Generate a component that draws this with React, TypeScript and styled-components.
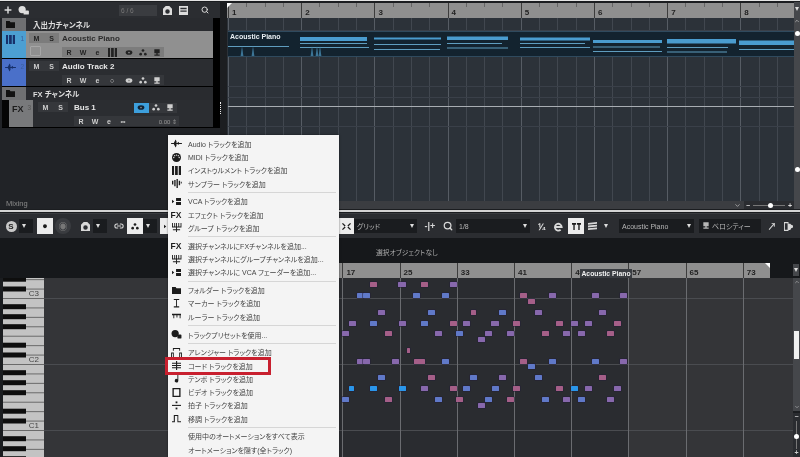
import { ReactNode } from "react";
import styled, { createGlobalStyle } from "styled-components";
import { ChevronDown, ChevronUp, Link2, Plus, Search } from "lucide-react";

const GlobalStyle = createGlobalStyle`
  html, body { margin: 0; padding: 0; background: #1b1d20; }
  body { font-family: "Liberation Sans", "Noto Sans CJK JP", sans-serif; }
`;

const Page = styled.div`
  position: relative;
  display: flex;
  flex-direction: column;
  width: 800px;
  height: 457px;
  overflow: hidden;
  background: #1b1d20;
  filter: blur(0.4px);
`;
const TopEdge = styled.div`
  height: 2px;
  flex: none;
  background: linear-gradient(#e4e4e4 50%, #1b1d20 50%);
`;
const TopZone = styled.div`
  display: flex;
  height: 207px;
  flex: none;
`;
const ZoneDivider = styled.div`
  flex: none;
  height: 5px;
  background: linear-gradient(#1b1d20 0 1px, #d4d4d4 1px 3px, #1b1d20 3px 4px, #3a3c40 4px);
`;

/* track list */
const TrackPane = styled.div`
  display: flex;
  flex-direction: column;
  width: 220px;
  flex: none;
  background: #212327;
`;
const PaneToolbar = styled.div`
  display: flex;
  align-items: center;
  height: 16px;
  flex: none;
  padding: 0 7px 0 3px;
  gap: 5px;
  color: #ddd;
  background: #2b2d31;
`;
const CountBox = styled.div`
  margin-left: auto;
  display: flex;
  align-items: center;
  width: 38px;
  height: 11px;
  padding-left: 2px;
  box-sizing: border-box;
  font-size: 6.5px;
  color: #777;
  background: #3a3c40;
`;
const TrackList = styled.div`
  display: flex;
  flex-direction: column;
  margin-left: 2px;
  background: #000;
  padding-right: 7px;
`;
const FolderRow = styled.div`
  display: flex;
  align-items: center;
  height: 13px;
  background: #292b2f;
  color: #ddd;
  font-size: 7.5px;
  font-weight: 700;
  font-feature-settings: "palt";
`;
const FolderCell = styled.div`
  display: flex;
  align-items: center;
  height: 100%;
  width: 24px;
  padding-left: 3px;
  box-sizing: border-box;
  margin-right: 7px;
  background: #6f7072;
  color: #111;
`;
const TrackRow = styled.div<{ $selected?: boolean }>`
  display: flex;
  height: 27px;
  margin-bottom: 1px;
  background: ${(p) => (p.$selected ? "#909090" : "#2b2d31")};
  color: ${(p) => (p.$selected ? "#2b2b2b" : "#e6e6e6")};
`;
const Gutter = styled.div`
  width: 7px;
  flex: none;
  background: #050505;
`;
const ColorCell = styled.div<{ $color: string }>`
  display: flex;
  align-items: flex-start;
  justify-content: space-between;
  width: 24px;
  flex: none;
  padding: 4px 2px 0 3px;
  box-sizing: border-box;
  background: ${(p) => p.$color};
  color: #17306a;
`;
const TrackNo = styled.span<{ $light?: boolean }>`
  font-size: 6.5px;
  color: ${(p) => (p.$light ? "#555" : "#3a5f9c")};
`;
const FxName = styled.span`
  font-size: 9px;
  font-weight: 700;
  color: #1d1d1d;
`;
const MuteColumn = styled.div<{ $bus?: boolean }>`
  display: flex;
  flex-direction: column;
  gap: 3px;
  width: ${(p) => (p.$bus ? 41 : 36)}px;
  flex: none;
  padding: 2px 0 0 ${(p) => (p.$bus ? 5 : 3)}px;
  box-sizing: border-box;
`;
const BtnRow = styled.div<{ $indent?: number }>`
  display: flex;
  margin-left: ${(p) => p.$indent || 0}px;
`;
const TBtn = styled.span<{ $light?: boolean; $on?: boolean; $w?: number }>`
  display: flex;
  align-items: center;
  justify-content: center;
  width: ${(p) => p.$w || 14}px;
  height: 10px;
  font-size: 7px;
  font-weight: 700;
  background: ${(p) => (p.$on ? "#3d9fdc" : p.$light ? "#7c7c7c" : "#35373b")};
  color: ${(p) => (p.$on ? "#123" : p.$light ? "#222" : "#cfcfcf")};
`;
const CheckBox = styled.div`
  width: 11px;
  height: 10px;
  margin-left: 1px;
  border: 1px solid #a6a6a6;
  box-sizing: border-box;
  border-radius: 1px;
`;
const TrackBody = styled.div`
  display: flex;
  flex-direction: column;
  flex: 1;
  gap: 3px;
  padding-top: 2px;
`;
const HeadRow = styled.div`
  display: flex;
  align-items: center;
  height: 11px;
`;
const TrackName = styled.span`
  font-size: 8px;
  font-weight: 700;
`;
const VolumeBox = styled.span`
  display: flex;
  align-items: center;
  justify-content: flex-end;
  width: 49px;
  height: 10px;
  padding-right: 2px;
  box-sizing: border-box;
  background: #35373b;
  color: #999;
  font-size: 6px;
`;
const MixFooter = styled.div`
  margin-top: auto;
  padding: 0 0 1px 6px;
  font-size: 7.5px;
  color: #8a8a8a;
`;

/* splitter between list and arranger */
const Splitter = styled.div`
  position: relative;
  width: 7px;
  flex: none;
  background: #1c1e21;
  &::after {
    content: "";
    position: absolute;
    left: 0;
    top: 100px;
    height: 12px;
    border-left: 1px dotted #eee;
  }
`;

/* arranger */
const Arranger = styled.div`
  display: flex;
  flex: 1;
  min-width: 0;
`;
const ArrMain = styled.div`
  display: flex;
  flex-direction: column;
  flex: 1;
  min-width: 0;
`;
const Ruler = styled.div`
  position: relative;
  display: flex;
  overflow: hidden;
  flex: none;
  height: 15px;
  margin-top: 1px;
  padding-left: 1px;
  background: repeating-linear-gradient(90deg, #666 0 1px, transparent 1px 18.3px) 1px 0 / 100% 4px no-repeat, #8f8f8f;
`;
const Corner = styled.i<{ $side: "left" | "right" }>`
  position: absolute;
  top: 0;
  ${(p) => p.$side}: 0;
  width: 5px;
  height: 5px;
  background: #fff;
  clip-path: ${(p) => (p.$side === "left" ? "polygon(0 0,100% 0,0 100%)" : "polygon(0 0,100% 0,100% 100%)")};
`;
const RulerBar = styled.div<{ $w: number }>`
  flex: none;
  width: ${(p) => p.$w}px;
  box-sizing: border-box;
  border-left: 1px solid #3c3c3c;
  padding: 5px 0 0 3px;
  font-size: 8px;
  font-weight: 700;
  color: #222;
`;
const Lanes = styled.div`
  display: flex;
  flex-direction: column;
  flex: 1;
  padding-top: 1px;
  padding-left: 1px;
  background:
    repeating-linear-gradient(90deg, #565c64 0 1px, transparent 1px 73.2px) 1px 0,
    repeating-linear-gradient(90deg, #41474f 0 1px, transparent 1px 18.3px) 1px 0,
    #2c3239;
`;
const Lane = styled.div<{ $h: number; $bright?: boolean }>`
  flex: none;
  height: ${(p) => p.$h}px;
  box-sizing: border-box;
  border-bottom: 1px solid ${(p) => (p.$bright ? "#a8adb2" : "#3a4049")};
`;
const Part = styled.div`
  position: relative;
  flex: none;
  height: 26px;
  background: #13232f;
  border-top: 1px solid #2f4a5e;
  border-bottom: 1px solid #2f4a5e;
  box-sizing: border-box;
  overflow: hidden;
`;
const PartLabel = styled.span`
  position: absolute;
  left: 2px;
  top: 1px;
  font-size: 7px;
  font-weight: 700;
  color: #e8eef2;
`;
const PartDrawing = styled.svg`
  position: absolute;
  left: 0;
  top: 0;
`;
const ArrBottom = styled.div`
  display: flex;
  align-items: center;
  justify-content: flex-end;
  flex: none;
  height: 8px;
  background: #3b3d41;
  color: #ddd;
`;
const ZoomBox = styled.div`
  display: flex;
  align-items: center;
  width: 50px;
  height: 100%;
  gap: 3px;
  padding: 0 2px;
  box-sizing: border-box;
  background: #2a2c30;
  margin-left: 3px;
  font-size: 7px;
  font-weight: 700;
`;
const SliderLine = styled.div`
  position: relative;
  flex: 1;
  height: 1px;
  background: #777;
  &::after {
    content: "";
    position: absolute;
    left: 48%;
    top: -2px;
    width: 5px;
    height: 5px;
    border-radius: 50%;
    background: #fff;
  }
`;
const ArrRail = styled.div`
  display: flex;
  flex-direction: column;
  align-items: center;
  width: 6px;
  flex: none;
  background: #45474b;
  color: #eee;
  padding-top: 5px;
  gap: 7px;
`;
const RailKnob = styled.i<{ $top?: number }>`
  display: block;
  width: 5px;
  height: 5px;
  border-radius: 50%;
  background: #fff;
  margin-top: ${(p) => p.$top || 0}px;
`;

/* lower zone */
const Toolbar = styled.div`
  display: flex;
  align-items: center;
  flex: none;
  height: 24px;
  padding: 0 4px 0 3px;
  box-sizing: border-box;
  background: #2b2d31;
  color: #d8d8d8;
`;
const ToolGroup = styled.div<{ $right?: boolean }>`
  display: flex;
  align-items: center;
  margin-left: ${(p) => (p.$right ? "auto" : 0)};
`;
const ToolBtn = styled.span<{ $on?: boolean; $dim?: boolean; $gap?: number }>`
  display: flex;
  align-items: center;
  justify-content: center;
  flex: none;
  width: 16px;
  height: 16px;
  margin-left: ${(p) => p.$gap || 0}px;
  font-size: 9px;
  font-weight: 700;
  border-radius: ${(p) => (p.$dim ? "50%" : 0)};
  background: ${(p) => (p.$on ? "#ececec" : p.$dim ? "#3a3c40" : "transparent")};
  color: ${(p) => (p.$on ? "#1b1b1b" : p.$dim ? "#777" : "#d8d8d8")};
`;
const RoundBadge = styled.span`
  display: flex;
  align-items: center;
  justify-content: center;
  width: 11px;
  height: 11px;
  border-radius: 50%;
  background: #c8c8c8;
  color: #222;
  font-size: 8px;
  font-weight: 700;
`;
const DropBox = styled.span<{ $w: number; $gap?: number }>`
  display: flex;
  align-items: center;
  justify-content: space-between;
  flex: none;
  width: ${(p) => p.$w}px;
  height: 14px;
  margin-left: ${(p) => p.$gap || 0}px;
  padding: 0 3px;
  box-sizing: border-box;
  background: #1a1c1f;
  color: #b6b6b6;
  font-size: 7px;
  font-feature-settings: "palt";
`;
const Arrow = styled.i`
  width: 0;
  height: 0;
  flex: none;
  border-left: 2.5px solid transparent;
  border-right: 2.5px solid transparent;
  border-top: 4px solid #ddd;
`;
const InfoBand = styled.div`
  display: flex;
  align-items: center;
  flex: none;
  height: 25px;
  padding: 3px 0 0 376px;
  box-sizing: border-box;
  background: #16181b;
  color: #aaa;
  font-size: 6.8px;
  font-feature-settings: "palt";
`;
const RulerRow = styled.div`
  position: relative;
  display: flex;
  flex: none;
  height: 15px;
  padding-left: 285.2px;
  background: #16181b;
`;
const EditRuler = styled.div`
  position: relative;
  display: flex;
  width: 484.8px;
  overflow: hidden;
  background: #8f8f8f;
`;
const RowArrow = styled.span`
  display: flex;
  align-items: center;
  justify-content: center;
  position: absolute;
  right: 1px;
  top: 1px;
  width: 6px;
  height: 12px;
  background: #45474b;
`;
const PartTip = styled.span`
  position: absolute;
  left: 580px;
  top: 6px;
  display: flex;
  align-items: center;
  justify-content: center;
  width: 52px;
  height: 9px;
  background: #3a3d42;
  color: #f0f0f0;
  font-size: 6.8px;
  font-weight: 700;
`;
const Roll = styled.div`
  display: flex;
  flex: 1;
  min-height: 0;
  padding-left: 3px;
  background: #1b1d20;
`;
const Keyboard = styled.div`
  position: relative;
  width: 41px;
  flex: none;
`;
const KeyDrawing = styled.svg`
  display: block;
`;
const OctaveLabel = styled.span<{ $top: number }>`
  position: absolute;
  right: 5px;
  top: ${(p) => p.$top}px;
  font-size: 8px;
  line-height: 10px;
  color: #444;
`;
const NoteCanvas = styled.div`
  position: relative;
  flex: 1;
  overflow: hidden;
  background:
    repeating-linear-gradient(180deg, #4a4c50 0 1px, transparent 1px 66px) 0 20px,
    #343538;
`;
const PartShade = styled.div`
  position: absolute;
  left: 184px;
  top: 0;
  bottom: 0;
  width: 400px;
  background: repeating-linear-gradient(180deg, #4a4c50 0 1px, transparent 1px 66px) 0 20px, #2a2c30;
`;
const BarLines = styled.div`
  position: absolute;
  left: 184px;
  top: 0;
  bottom: 0;
  right: 0;
  background: repeating-linear-gradient(90deg, #6a6c70 0 1px, transparent 1px 57.2px);
`;
const NOTE_COLORS = {
  p: "#a55f88",
  u: "#8768ac",
  b: "#6079c8",
  c: "#2a96ea",
};
const Note = styled.i<{ $kind: keyof typeof NOTE_COLORS }>`
  position: absolute;
  height: 5px;
  box-sizing: border-box;
  border-radius: 0.5px;
  background: ${(p) => NOTE_COLORS[p.$kind]};
  box-shadow: 0 0 0 0.5px #231e36;
`;
const RollRail = styled.div`
  display: flex;
  flex-direction: column;
  align-items: center;
  flex: none;
  width: 7px;
  background: #1b1d20;
  color: #ccc;
`;
const RailTrack = styled.div`
  display: flex;
  flex-direction: column;
  align-items: center;
  justify-content: space-between;
  width: 100%;
  height: 133px;
  padding: 1px 0;
  box-sizing: border-box;
  background: #45474b;
`;
const RailThumb = styled.i`
  display: block;
  width: 5px;
  height: 28px;
  margin-top: 1px;
  background: #f0f0f0;
`;
const RailZoom = styled.div`
  display: flex;
  flex-direction: column;
  align-items: center;
  flex: 1;
  margin-top: 2px;
  width: 100%;
  background: #2a2c30;
  font-size: 7px;
  font-weight: 700;
  line-height: 8px;
`;
const RailSlide = styled.i`
  position: relative;
  display: block;
  width: 1px;
  height: 28px;
  background: #777;
  &::after {
    content: "";
    position: absolute;
    left: -2px;
    top: 13px;
    width: 5px;
    height: 5px;
    border-radius: 50%;
    background: #fff;
  }
`;

/* add-track context menu */
const Menu = styled.div`
  position: absolute;
  left: 168px;
  top: 135px;
  width: 171px;
  height: 330px;
  padding-top: 2.3px;
  box-sizing: border-box;
  background: #f4f4f4;
  box-shadow: 0 0 2px rgba(0, 0, 0, 0.5);
  color: #444;
`;
const MenuRow = styled.div`
  display: flex;
  align-items: center;
  height: 13.23px;
  font-size: 7px;
  font-feature-settings: "palt";
  white-space: nowrap;
`;
const MenuIcon = styled.span`
  display: flex;
  align-items: center;
  justify-content: center;
  flex: none;
  width: 16px;
  margin-right: 4px;
  color: #1c1c1c;
  font-size: 8.5px;
  font-weight: 700;
`;
const MenuSep = styled.div`
  height: 4.7px;
  display: flex;
  align-items: center;
  padding: 0 3px 0 20px;
  &::after {
    content: "";
    flex: 1;
    height: 1px;
    background: #d6d6d6;
  }
`;
const Highlight = styled.div`
  position: absolute;
  left: 165px;
  top: 357px;
  width: 106px;
  height: 18px;
  box-sizing: border-box;
  border: 3px solid #c8202f;
`;

const Glyph = ({ children, w = 11, h = 9 }: { children: ReactNode; w?: number; h?: number }) => (
  <svg width={w} height={h} viewBox="0 0 12 10" fill="currentColor" stroke="none">
    {children}
  </svg>
);

const WaveIcon = () => (
  <Glyph><path d="M0 4.5h3l1-2 1-2 1 2v2h1l1-1.5 1 1.5h3v1H9l-1 1-1-1H6v2l-1 2-1-2-1-2H0z" /></Glyph>
);
const DinIcon = () => (
  <Glyph>
    <circle cx="6" cy="5" r="5" />
    <g fill="#f4f4f4"><circle cx="3" cy="5" r=".7" /><circle cx="4" cy="3" r=".7" /><circle cx="6" cy="2.3" r=".7" /><circle cx="8" cy="3" r=".7" /><circle cx="9" cy="5" r=".7" /></g>
  </Glyph>
);
const KeysIcon = () => (
  <Glyph><path d="M1 0h2.3v10H1zM4.4 0h3v10h-3zM8.5 0H11v10H8.5z" /></Glyph>
);
const SamplerIcon = () => (
  <Glyph><path d="M1 2h1.5v4H1zM3.5 1H5v7H3.5zM6 0h1.5v10H6zM8.5 2H10v5H8.5zM10.8 3h1v2h-1z" /></Glyph>
);
const VcaIcon = () => (
  <Glyph><path d="M1 3l2.5 2L1 7zM5.5 1H11v3.5H5.5zM5.5 5.500H11V9H5.5z" /></Glyph>
);
const GroupIcon = () => (
  <Glyph><path d="M1 0h1v4h1.5V0h1v4H5.5V0h1v4H8V0h1v4h1.5V0h1v5H6.5v2H10v1H6.5v2h-1V8H2V7h3.5V5H1z" /></Glyph>
);
const FolderIcon = () => (
  <Glyph><path d="M1 1h4l1 1.5h5V9H1z" /></Glyph>
);
const MarkerIcon = () => (
  <Glyph><path d="M3 0h6v1H6.5v7H9v1.5H3V8h2.5V1H3z" /></Glyph>
);
const RulerIcon = () => (
  <Glyph><path d="M1 2h10v1.5H10.5V7h-1V3.5H7V6H6V3.5H3.5V7h-1V3.5H1z" /></Glyph>
);
const PresetIcon = () => (
  <Glyph><circle cx="4.5" cy="4" r="4" /><rect x="7" y="5" width="4.5" height="4.5" rx="1" /></Glyph>
);
const ArrangerIcon = () => (
  <Glyph><path d="M2 0h8v3H9V1H3v2H2zM0 5h3v5H2V6H1v4H0zM9 5h3v5h-1V6h-1v4H9z" /></Glyph>
);
const ChordIcon = () => (
  <Glyph><path d="M1 2h10v1H1zM1 4.5h10v1H1zM1 7h10v1H1zM5.5 0h1.2v10H5.5z" /></Glyph>
);
const TempoIcon = () => (
  <Glyph><path d="M7 0h1v7.5a2 2 0 1 1-1-1.700z" /></Glyph>
);
const VideoIcon = () => (
  <Glyph><path fillRule="evenodd" d="M1.5 0h9v10h-9zM3 1.5v7h6v-7z" /></Glyph>
);
const SignatureIcon = () => (
  <Glyph><path d="M1 4.3h10v1.2H1z" /><rect x="5" y=".5" width="2" height="2" /><rect x="5" y="7.3" width="2" height="2" /></Glyph>
);
const TransposeIcon = () => (
  <Glyph><path d="M1 8h2V1h5v7h3v1.2H7V2.2H4.2v7H1z" /></Glyph>
);
const EyeIcon = () => (
  <Glyph w={8} h={7}><ellipse cx="6" cy="5" rx="5" ry="3.5" /><circle cx="6" cy="5" r="1.3" fill="#8a8a8a" /></Glyph>
);
const NodeIcon = () => (
  <Glyph w={8} h={7}><circle cx="6" cy="2" r="2" /><circle cx="2.5" cy="7.5" r="2" /><circle cx="9.5" cy="7.5" r="2" /></Glyph>
);
const MeterIcon = () => (
  <Glyph w={8} h={7}><path d="M2 0h8v6H2zM5 6h2v2h3v2H2V8h3z" /></Glyph>
);
const CloudIcon = () => (
  <Glyph><circle cx="4.5" cy="4" r="4" /><rect x="6" y="5" width="6" height="4.5" rx="1" /></Glyph>
);
const CameraIcon = () => (
  <Glyph><path fillRule="evenodd" d="M1 3l3-3h4l3 3v7H1zM3.5 6a2.5 2.5 0 1 0 5 0 2.5 2.5 0 1 0-5 0z" /></Glyph>
);
const ListIcon = () => (
  <Glyph><path fillRule="evenodd" d="M1 0h10v10H1zM2.5 2v1.5h7V2zM2.5 5v1.5h7V5z" /></Glyph>
);
const QuantizeCross = () => (
  <Glyph><path d="M2 1l3 3-1 1-3-3zM10 1L7 4l1 1 3-3zM2 9l3-3-1-1-3 3zM10 9L7 6l1-1 3 3z" /></Glyph>
);
const StackIcon = () => (
  <Glyph><path d="M1 1l10-1v2L1 3zM1 4l10-1v2L1 6zM1 7l10-1v2L1 9z" /></Glyph>
);
const PanelIcon = () => (
  <Glyph><path fillRule="evenodd" d="M1 0h5v2h2l1 1 2 1v2l-2 1-1 2H6v1H1zM2 1.5v7h3v-7z" /></Glyph>
);
const EditorIcon = () => (
  <Glyph><path d="M1 1h4.500v2H4v6H2.500V3H1zM6.500 1H11v2H9.500v6H8V3H6.500z" /></Glyph>
);
const RingE = () => (
  <svg width="11" height="11" viewBox="0 0 12 12" fill="none" stroke="currentColor" strokeWidth="2">
    <path d="M2.500 6.500h7a3.700 3.700 0 1 0-1.200 3" />
  </svg>
);

const MENU: (null | { icon?: ReactNode; text: string })[] = [
  { icon: <WaveIcon />, text: "Audio トラックを追加" },
  { icon: <DinIcon />, text: "MIDI トラックを追加" },
  { icon: <KeysIcon />, text: "インストゥルメント トラックを追加" },
  { icon: <SamplerIcon />, text: "サンプラー トラックを追加" },
  null,
  { icon: <VcaIcon />, text: "VCA トラックを追加" },
  { icon: "FX", text: "エフェクト トラックを追加" },
  { icon: <GroupIcon />, text: "グループ トラックを追加" },
  null,
  { icon: "FX", text: "選択チャンネルにFXチャンネルを追加..." },
  { icon: <GroupIcon />, text: "選択チャンネルにグループチャンネルを追加..." },
  { icon: <VcaIcon />, text: "選択チャンネルに VCA フェーダーを追加..." },
  null,
  { icon: <FolderIcon />, text: "フォルダー トラックを追加" },
  { icon: <MarkerIcon />, text: "マーカー トラックを追加" },
  { icon: <RulerIcon />, text: "ルーラー トラックを追加" },
  null,
  { icon: <PresetIcon />, text: "トラックプリセットを使用..." },
  null,
  { icon: <ArrangerIcon />, text: "アレンジャー トラックを追加" },
  { icon: <ChordIcon />, text: "コード トラックを追加" },
  { icon: <TempoIcon />, text: "テンポ トラックを追加" },
  { icon: <VideoIcon />, text: "ビデオ トラックを追加" },
  { icon: <SignatureIcon />, text: "拍子 トラックを追加" },
  { icon: <TransposeIcon />, text: "移調 トラックを追加" },
  null,
  { text: "使用中のオートメーションをすべて表示" },
  { text: "オートメーションを隠す(全トラック)" },
];

// [y, x, kind, width?] measured from the reference, y/x in 1/3 px steps
type NoteDef = [number, number, keyof typeof NOTE_COLORS, number?];
const NOTES: NoteDef[] = [
  [44, 101, "p"], [44, 187, "u", 8], [44, 252, "p"], [44, 339, "u"],
  [77, 60, "b"], [77, 78, "b"], [77, 228, "b"], [77, 316, "b"], [77, 551, "p"], [77, 637, "u"], [77, 767, "u"], [77, 851, "u"],
  [93, 573, "p"],
  [126, 123, "u"], [126, 273, "b"], [126, 400, "p", 5], [126, 487, "b"], [126, 596, "u"], [126, 788, "u"],
  [159, 37, "u"], [159, 101, "b"], [159, 187, "u"], [159, 252, "b"], [159, 339, "p"], [159, 380, "u"], [159, 466, "u", 8], [159, 529, "p"], [159, 659, "p"], [159, 702, "u"], [159, 744, "u"], [159, 831, "p"],
  [191, 15, "u"], [191, 144, "p"], [191, 294, "u"], [191, 359, "b"], [191, 444, "u"], [191, 510, "u"], [191, 615, "p"], [191, 680, "u"], [191, 724, "u"], [191, 810, "p"],
  [208, 424, "u"],
  [240, 204, "p", 3],
  [274, 60, "u"], [274, 80, "u"], [274, 165, "u"], [274, 237, "p", 11], [274, 316, "b"], [274, 551, "p"], [274, 637, "b"], [274, 767, "b"], [274, 851, "u"],
  [290, 573, "b"],
  [323, 123, "b"], [323, 273, "p"], [323, 400, "b"], [323, 488, "u"], [323, 596, "b"], [323, 788, "p"],
  [355, 34, "c", 5], [355, 101, "c"], [355, 187, "c"], [355, 252, "u"], [355, 339, "p"], [355, 380, "b"], [355, 466, "b"], [355, 529, "p"], [355, 659, "p"], [355, 702, "c"], [355, 744, "u"], [355, 831, "u"],
  [388, 15, "b"], [388, 144, "p"], [388, 294, "b"], [388, 359, "p"], [388, 444, "b"], [388, 510, "p"], [388, 615, "b"], [388, 680, "u"], [388, 723, "b"], [388, 810, "u"],
  [405, 424, "u"],
];

const PianoKeys = () => {
  const octaves = [20, 86, 152, 218];
  return (
    <KeyDrawing width="41" height="179" viewBox="0 0 41 179">
      <rect width="41" height="179" fill="#c3c3c3" />
      {octaves.map((b) => (
        <g key={b}>
          {[0, 1, 2, 3, 4, 5, 6].map((j) => (
            <rect key={j} x="0" y={b - j * 9.43} width="41" height="1" fill="#6a6a6a" />
          ))}
          {[9, 18.8, 37.3, 47.3, 57.3].map((d) => (
            <rect key={d} x="0" y={b - d - 2.5} width="23" height="5" fill="#0e0e0e" />
          ))}
        </g>
      ))}
    </KeyDrawing>
  );
};

const PartNotes = () => {
  const thick = [
    [300, 367, 37, 4], [374, 441, 37.5, 2], [447, 508, 36.5, 3.5], [520, 590, 37.5, 3], [593, 662, 40, 3], [667, 736, 39, 4.5], [739, 795, 40.5, 4.5],
  ];
  const thin = [
    [228, 289, 46], [300, 367, 43], [300, 369, 47], [374, 441, 44], [374, 440, 49], [447, 502, 43], [447, 508, 47.5], [520, 585, 43], [520, 590, 47], [593, 660, 46.5], [593, 662, 51], [667, 728, 47], [667, 727, 51.5], [739, 795, 49],
  ];
  const spikes = [242, 253, 312, 317, 320];
  return (
    <PartDrawing width="567" height="26" viewBox="228 32 567 26">
      {thick.map(([a, b, y, h]) => (
        <rect key={a} x={a} y={y} width={b - a} height={h} fill="#4a9ccf" />
      ))}
      {thin.map(([a, b, y]) => (
        <rect key={`${a}-${y}`} x={a} y={y} width={b - a} height="1" fill="#5f9dbf" />
      ))}
      {spikes.map((x) => (
        <path key={x} d={`M${x - 1.5} 57 L${x} 46 L${x + 1.5} 57z`} fill="#3c7596" />
      ))}
    </PartDrawing>
  );
};

export default function App() {
  return (
    <Page>
      <GlobalStyle />
      <TopEdge />
      <TopZone>
        <TrackPane>
          <PaneToolbar>
            <Plus size={10} strokeWidth={3.5} />
            <CloudIcon />
            <CountBox>6 / 6</CountBox>
            <CameraIcon />
            <ListIcon />
            <ToolBtn $gap={3}><Search size={8} strokeWidth={3} /></ToolBtn>
          </PaneToolbar>
          <TrackList>
            <FolderRow>
              <FolderCell><FolderIcon /></FolderCell>
              入出力チャンネル
            </FolderRow>
            <TrackRow $selected>
              <ColorCell $color="#4c9fd2"><KeysIcon /><TrackNo>1</TrackNo></ColorCell>
              <MuteColumn>
                <BtnRow><TBtn $light $w={15}>M</TBtn><TBtn $light $w={15}>S</TBtn></BtnRow>
                <CheckBox />
              </MuteColumn>
              <TrackBody>
                <HeadRow><TrackName>Acoustic Piano</TrackName></HeadRow>
                <BtnRow>
                  <TBtn $light>R</TBtn><TBtn $light>W</TBtn><TBtn $light $w={15}>e</TBtn>
                  <TBtn $light><KeysIcon /></TBtn>
                  <TBtn $light $w={3} />
                  <TBtn $light><EyeIcon /></TBtn><TBtn $light><NodeIcon /></TBtn><TBtn $light><MeterIcon /></TBtn>
                </BtnRow>
              </TrackBody>
            </TrackRow>
            <TrackRow>
              <ColorCell $color="#4a70c9"><WaveIcon /><TrackNo>2</TrackNo></ColorCell>
              <MuteColumn>
                <BtnRow><TBtn $w={15}>M</TBtn><TBtn $w={15}>S</TBtn></BtnRow>
              </MuteColumn>
              <TrackBody>
                <HeadRow><TrackName>Audio Track 2</TrackName></HeadRow>
                <BtnRow>
                  <TBtn>R</TBtn><TBtn>W</TBtn><TBtn $w={15}>e</TBtn><TBtn>○</TBtn>
                  <TBtn $w={3} />
                  <TBtn><EyeIcon /></TBtn><TBtn><NodeIcon /></TBtn><TBtn><MeterIcon /></TBtn>
                </BtnRow>
              </TrackBody>
            </TrackRow>
            <FolderRow>
              <FolderCell><FolderIcon /></FolderCell>
              FX チャンネル
            </FolderRow>
            <TrackRow>
              <Gutter />
              <ColorCell $color="#78797b">
                <FxName>FX</FxName>
                <TrackNo $light>3</TrackNo>
              </ColorCell>
              <MuteColumn $bus>
                <BtnRow><TBtn $w={15}>M</TBtn><TBtn $w={15}>S</TBtn></BtnRow>
              </MuteColumn>
              <TrackBody>
                <HeadRow>
                  <TrackName>Bus 1</TrackName>
                  <BtnRow $indent={38}>
                    <TBtn $on $w={15}><EyeIcon /></TBtn><TBtn><NodeIcon /></TBtn><TBtn><MeterIcon /></TBtn>
                  </BtnRow>
                </HeadRow>
                <BtnRow>
                  <TBtn>R</TBtn><TBtn>W</TBtn><TBtn>e</TBtn><TBtn>∞</TBtn>
                  <VolumeBox>0.00 ⇕</VolumeBox>
                </BtnRow>
              </TrackBody>
            </TrackRow>
          </TrackList>
          <MixFooter>Mixing</MixFooter>
        </TrackPane>
        <Splitter />
        <Arranger>
          <ArrMain>
            <Ruler>
              <Corner $side="left" />
              {[1, 2, 3, 4, 5, 6, 7, 8].map((n) => (
                <RulerBar key={n} $w={73.2}>{n}</RulerBar>
              ))}
            </Ruler>
            <Lanes>
              <Lane $h={12} />
              <Part>
                <PartNotes />
                <PartLabel>Acoustic Piano</PartLabel>
              </Part>
              <Lane $h={30} />
              <Lane $h={11} />
              <Lane $h={9} $bright />
              <Lane $h={20} />
            </Lanes>
            <ArrBottom>
              <ChevronDown size={7} />
              <ZoomBox>−<SliderLine />+</ZoomBox>
            </ArrBottom>
          </ArrMain>
          <ArrRail>
            <Arrow />
            <ChevronUp size={6} />
            <RailKnob />
            <RailKnob $top={124} />
          </ArrRail>
        </Arranger>
      </TopZone>
      <ZoneDivider />
      <Toolbar>
        <ToolGroup>
          <ToolBtn><RoundBadge>S</RoundBadge></ToolBtn>
          <DropBox $w={14}><Arrow /></DropBox>
          <ToolBtn $on $gap={4}>●</ToolBtn>
          <ToolBtn $dim $gap={2}>◉</ToolBtn>
          <ToolBtn $gap={6}><CameraIcon /></ToolBtn>
          <DropBox $w={14}><Arrow /></DropBox>
          <ToolBtn $gap={4}><Link2 size={10} strokeWidth={2.5} /></ToolBtn>
          <ToolBtn $on><NodeIcon /></ToolBtn>
          <DropBox $w={14}><Arrow /></DropBox>
          <ToolBtn $on $gap={3}><VcaIcon /></ToolBtn>
        </ToolGroup>
        <ToolGroup $right>
          <ToolBtn $on><QuantizeCross /></ToolBtn>
          <DropBox $w={63}>グリッド<Arrow /></DropBox>
          <ToolBtn $gap={5}>-|+</ToolBtn>
          <ToolBtn $gap={2}><Search size={10} strokeWidth={3} /></ToolBtn>
          <DropBox $w={74}>1/8<Arrow /></DropBox>
          <ToolBtn $gap={4}>⅟₄</ToolBtn>
          <ToolBtn><RingE /></ToolBtn>
          <ToolBtn $on $gap={2}><EditorIcon /></ToolBtn>
          <ToolBtn><StackIcon /></ToolBtn>
          <ToolBtn $gap={-2}><Arrow /></ToolBtn>
          <DropBox $w={75} $gap={5}>Acoustic Piano<Arrow /></DropBox>
          <DropBox $w={62} $gap={5}><span><MeterIcon /> ベロシティー</span></DropBox>
          <ToolBtn $gap={3}>↗</ToolBtn>
          <ToolBtn><PanelIcon /></ToolBtn>
        </ToolGroup>
      </Toolbar>
      <InfoBand>選択オブジェクトなし</InfoBand>
      <RulerRow>
        <EditRuler>
          {["", "17", "25", "33", "41", "49", "57", "65", "73"].map((n) => (
            <RulerBar key={n} $w={57.2}>{n}</RulerBar>
          ))}
          <Corner $side="right" />
        </EditRuler>
        <PartTip>Acoustic Piano</PartTip>
        <RowArrow><Arrow /></RowArrow>
      </RulerRow>
      <Roll>
        <Keyboard>
          <PianoKeys />
          <OctaveLabel $top={11}>C3</OctaveLabel>
          <OctaveLabel $top={77}>C2</OctaveLabel>
          <OctaveLabel $top={143}>C1</OctaveLabel>
        </Keyboard>
        <NoteCanvas>
          <PartShade />
          <BarLines />
          {NOTES.map(([y, x, kind, w = 7], i) => (
            <Note
              key={i}
              $kind={kind}
              style={{ left: 340 + x / 3 - 44 - w / 2, top: 270 + y / 3 - 278 - 2.5, width: w }}
            />
          ))}
        </NoteCanvas>
        <RollRail>
          <RailTrack>
            <ChevronUp size={6} />
            <RailThumb />
            <ChevronDown size={6} />
          </RailTrack>
          <RailZoom>−<RailSlide />+</RailZoom>
        </RollRail>
      </Roll>
      <Menu>
        {MENU.map((item, i) =>
          item ? (
            <MenuRow key={i}>
              <MenuIcon>{item.icon}</MenuIcon>
              {item.text}
            </MenuRow>
          ) : (
            <MenuSep key={i} />
          )
        )}
      </Menu>
      <Highlight />
    </Page>
  );
}
